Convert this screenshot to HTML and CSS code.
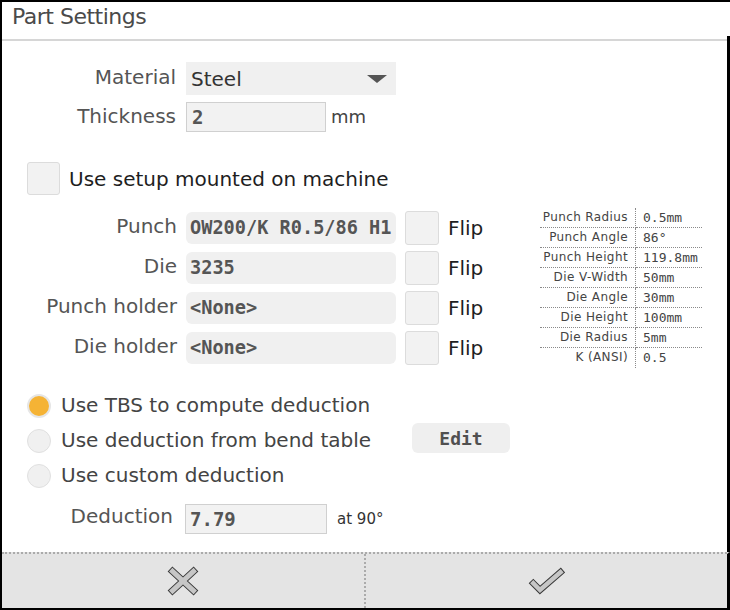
FILE: index.html
```html
<!DOCTYPE html>
<html>
<head>
<meta charset="utf-8">
<title>Part Settings</title>
<link rel="stylesheet" href="styles.css">
</head>
<body>
<div class="window">
  <div class="titlebar"><h1 class="title">Part Settings</h1></div>
  <div class="body">
    <div class="sep"></div>
    <div class="content">
      <div class="basic">
        <label class="lbl">Material</label>
        <div class="select"><span>Steel</span><svg class="caret" width="20" height="8" viewBox="0 0 20 8"><polygon points="0,0 20,0 10,8" fill="#555"/></svg></div>
        <label class="lbl">Thickness</label>
        <div class="thick"><div class="input mono">2</div><span class="unit">mm</span></div>
      </div>

      <div class="check-row"><span class="checkbox"></span><span class="check-text">Use setup mounted on machine</span></div>

      <div class="tools">
        <div class="tool-grid">
          <label class="tlbl">Punch</label><div class="field mono">OW200/K R0.5/86 H1</div><span class="checkbox flipbox"></span><span class="flip">Flip</span>
          <label class="tlbl">Die</label><div class="field mono">3235</div><span class="checkbox flipbox"></span><span class="flip">Flip</span>
          <label class="tlbl">Punch holder</label><div class="field mono">&lt;None&gt;</div><span class="checkbox flipbox"></span><span class="flip">Flip</span>
          <label class="tlbl">Die holder</label><div class="field mono">&lt;None&gt;</div><span class="checkbox flipbox"></span><span class="flip">Flip</span>
        </div>
        <div class="specs">
          <div class="sk">Punch Radius</div><div class="sv">0.5mm</div>
          <div class="sk">Punch Angle</div><div class="sv">86°</div>
          <div class="sk">Punch Height</div><div class="sv">119.8mm</div>
          <div class="sk">Die V-Width</div><div class="sv">50mm</div>
          <div class="sk">Die Angle</div><div class="sv">30mm</div>
          <div class="sk">Die Height</div><div class="sv">100mm</div>
          <div class="sk">Die Radius</div><div class="sv">5mm</div>
          <div class="sk last">K (ANSI)</div><div class="sv last">0.5</div>
        </div>
      </div>

      <div class="radios">
        <div class="radio-row"><span class="radio on"></span><span class="rtext">Use TBS to compute deduction</span></div>
        <div class="radio-row"><span class="radio"></span><span class="rtext">Use deduction from bend table</span><button class="edit mono">Edit</button></div>
        <div class="radio-row"><span class="radio"></span><span class="rtext">Use custom deduction</span></div>
      </div>

      <div class="deduction">
        <label class="dlbl">Deduction</label>
        <div class="dinput mono">7.79</div>
        <span class="at">at 90°</span>
      </div>
    </div>
  </div>
  <div class="footer">
    <div class="fbtn cancel">
      <svg width="34" height="32" viewBox="0 0 34 32">
        <path d="M4 4 L30 28 M30 4 L4 28" stroke="#3a3a3a" stroke-width="7" fill="none"/>
        <path d="M4.7 4.7 L29.3 27.3 M29.3 4.7 L4.7 27.3" stroke="#c6c6c6" stroke-width="5" fill="none"/>
      </svg>
    </div>
    <div class="fbtn ok">
      <svg width="38" height="28" viewBox="0 0 38 28">
        <polyline points="3,14 12,23 35,3" stroke="#3a3a3a" stroke-width="6.5" fill="none" stroke-linejoin="miter"/>
        <polyline points="3.7,14.7 12,23 34.2,3.7" stroke="#c6c6c6" stroke-width="4.5" fill="none" stroke-linejoin="miter"/>
      </svg>
    </div>
  </div>
</div>
</body>
</html>
```

FILE: styles.css
```css
* { box-sizing: border-box; margin: 0; padding: 0; }
html, body { width: 730px; height: 610px; overflow: hidden; background: #fff; }
body { font-family: "DejaVu Sans", sans-serif; color: #333; }

.mono { font-family: "DejaVu Sans Mono", monospace; font-weight: bold; color: #555; }

.window {
  width: 730px; height: 610px;
  border: 2px solid #000; border-right: none;
  display: flex; flex-direction: column;
  background: #fff;
}
.titlebar { height: 34px; padding: 2px 0 0 10px; }
.title { font-weight: normal; font-size: 22px; line-height: 26px; letter-spacing: -0.5px; color: #4a4a4a; }

.body { flex: 1; border-right: 3px solid #000; display: flex; flex-direction: column; }
.sep { height: 2px; background: #d6d6d6; margin-top: 3px; }
.content { padding: 21px 25px 0 0; }

.basic {
  display: grid;
  grid-template-columns: 174px 210px;
  column-gap: 10px; row-gap: 7px;
  align-items: center;
}
.lbl { text-align: right; font-size: 20px; color: #555; padding-bottom: 3px; }
.select {
  height: 33px; background: #f0f0f0;
  display: flex; align-items: center; justify-content: space-between;
  padding: 0 9px 0 5px; font-size: 20px; color: #333;
}
.thick { display: flex; align-items: center; gap: 5px; }
.input {
  width: 140px; height: 30px; border: 1px solid #d0d0d0; background: #f2f2f2;
  display: flex; align-items: center; padding-left: 5px; font-size: 19px;
}
.unit { font-size: 18px; color: #444; padding-bottom: 2px; }

.check-row { margin-top: 30px; padding-left: 25px; display: flex; align-items: center; gap: 9px; }
.checkbox { display: block; width: 33px; height: 33px; background: #f2f2f2; border: 1px solid #dcdcdc; border-radius: 3px; }
.check-text { font-size: 20px; color: #1e1e1e; }

.tools { margin-top: 16px; display: flex; align-items: flex-start; justify-content: space-between; }
.tool-grid {
  display: grid;
  grid-template-columns: 175px 210px 34px auto;
  grid-auto-rows: 34px;
  column-gap: 9px; row-gap: 6px;
  align-items: center;
}
.tlbl { text-align: right; font-size: 20px; color: #555; padding-bottom: 4px; }
.field {
  height: 32px; background: #f0f0f0; border-radius: 6px;
  padding-left: 4px; font-size: 18.6px; line-height: 32px;
  white-space: nowrap;
}
.flipbox { width: 34px; height: 34px; }
.flip { font-size: 20px; color: #1e1e1e; }

.specs {
  margin-top: -3px;
  display: grid;
  grid-template-columns: 96px 66px;
  grid-auto-rows: 20px;
}
.sk, .sv { border-bottom: 1px dotted #8a8a8a; line-height: 19px; color: #444; white-space: nowrap; }
.sk { text-align: right; padding-right: 7px; border-right: 1px dotted #8a8a8a; font-size: 12px; letter-spacing: 0.4px; }
.sv { padding-left: 7px; font-family: "DejaVu Sans Mono", monospace; font-size: 13px; }
.sk.last, .sv.last { border-bottom: none; }

.radios { margin-top: 20px; }
.radio-row {
  height: 35px; padding-left: 25px;
  display: grid; grid-template-columns: 24px 341px auto; column-gap: 10px;
  align-items: center;
}
.radio { display: block; width: 24px; height: 24px; border-radius: 50%; background: #f0f0f0; border: 1px solid #e0e0e0; }
.radio.on { background: #f5b335; border: 2px solid #e6e6e6; }
.rtext { font-size: 20px; color: #444; padding-bottom: 2px; }
.edit {
  align-self: start; width: 98px; height: 30px; border: none; border-radius: 6px;
  background: #efefef; font-size: 18px; color: #505050;
}

.deduction { margin-top: 11px; display: flex; align-items: center; }
.dlbl { width: 171px; text-align: right; margin-right: 12px; font-size: 20px; color: #555; padding-bottom: 6px; }
.dinput {
  width: 142px; height: 30px; border: 1px solid #d0d0d0; background: #f2f2f2;
  display: flex; align-items: center; padding-left: 4px; font-size: 19px;
}
.at { margin-left: 10px; font-size: 15px; color: #333; }

.footer {
  height: 56px; background: #e4e4e4;
  border-top: 2px dotted #ababab; border-right: 3px solid #000;
  display: grid; grid-template-columns: 364px 1fr;
}
.fbtn { display: flex; align-items: center; justify-content: center; }
.cancel { border-right: 2px dotted #ababab; }
```
